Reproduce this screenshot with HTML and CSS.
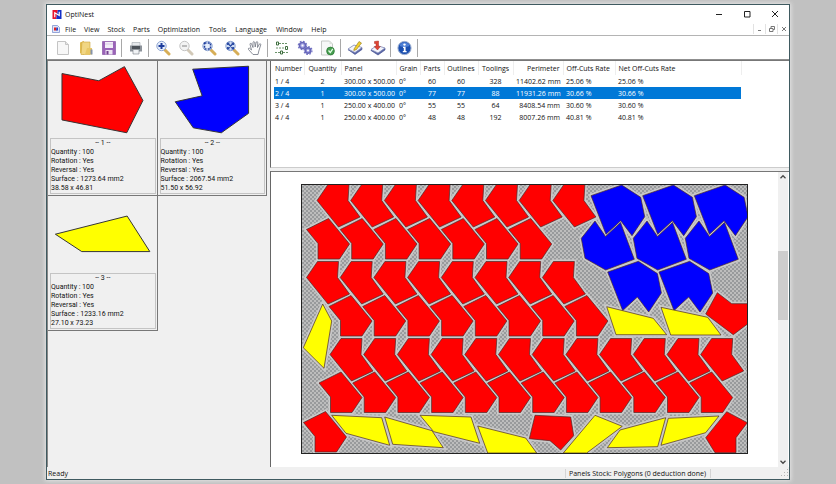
FILE: index.html
```html
<!DOCTYPE html>
<html lang="en">
<head>
<meta charset="utf-8">
<title>OptiNest</title>
<link rel="stylesheet" href="styles.css">
</head>
<body>
<div class="window">
  <header class="titlebar">
    <svg class="logo" viewBox="0 0 10 10" aria-hidden="true"><path fill="#e8122c" d="M0 0h6L4 10H0z"/><path fill="#1430c8" d="M6 0h4v10H4z"/><path fill="none" stroke="#fff" stroke-width="1.3" d="M2.5 8V3l5 3V2"/></svg>
    <h1 class="title">OptiNest</h1>
    <div class="controls">
      <button class="ctl" aria-label="Minimize"><svg viewBox="0 0 8 8"><path d="M1 4.5h6"/></svg></button>
      <button class="ctl" aria-label="Maximize"><svg viewBox="0 0 8 8"><path d="M1.5 1.5h5.500v5.500h-5.500z"/></svg></button>
      <button class="ctl" aria-label="Close"><svg viewBox="0 0 8 8"><path d="M1 1l6 6M7 1l-6 6"/></svg></button>
    </div>
  </header>
  <nav class="menubar">
    <svg class="doc" viewBox="0 0 8 8" aria-hidden="true"><path fill="#dfe6fa" stroke="#7f92cf" stroke-width=".8" d="M.5.5h5l2 2v5h-7z"/><path fill="#d22" d="M2 2.500h2.500v3H2z"/><path fill="#24c" d="M4.500 2.500H6v3H4z"/></svg>
    <button>File</button><button>View</button><button>Stock</button><button>Parts</button><button>Optimization</button><button>Tools</button><button>Language</button><button>Window</button><button>Help</button>
    <div class="mdi">
      <button aria-label="Minimize document"><svg viewBox="0 0 8 8"><path d="M2 5.500h3"/></svg></button>
      <button aria-label="Restore document"><svg viewBox="0 0 8 8"><path d="M1.500 3.500h3.500v3h-3.500zM3 3.500v-2h3.500v3H5"/></svg></button>
      <button aria-label="Close document"><svg viewBox="0 0 8 8"><path d="M2 2l4 4M6 2l-4 4"/></svg></button>
    </div>
  </nav>
  <div class="toolbar">
    <button aria-label="New"><svg viewBox="0 0 16 16"><path fill="#f7f7f7" stroke="#c4c4c4" d="M2.500 1.500h8l3 3v10h-11z"/><path fill="#e4e4e4" stroke="#c4c4c4" d="M10.500 1.500v3h3"/></svg></button>
    <button aria-label="Open"><svg viewBox="0 0 16 16"><path fill="#e2bd52" d="M2 2.500l4-1.500v14l-4-2z"/><path fill="#f1d683" stroke="#cfa63e" stroke-width=".6" d="M4 2h8v12.500H3z"/><path fill="#e9c765" d="M9 8h5v6.500H7z"/><path fill="#8593aa" d="M12.500 9.500h2v5h-2z"/></svg></button>
    <button aria-label="Save"><svg viewBox="0 0 16 16"><path fill="#9a63b8" stroke="#7d4a9c" stroke-width=".6" d="M1.500 1.500h13v13h-13z"/><path fill="#f3eef7" d="M4 2h8v6H4z"/><path fill="#d9c8e4" d="M4 3.500h8v1H4z"/><path fill="#ece4f2" d="M4.500 10h7v4.500h-7z"/><path fill="#74418f" d="M5.500 11h2v3.500h-2z"/></svg></button>
    <span class="sep"></span>
    <button aria-label="Print"><svg viewBox="0 0 16 16"><path fill="#e6e9ec" stroke="#a0a6ac" stroke-width=".6" d="M4 2.500h8v4H4z"/><path fill="#8d939a" d="M2 5.500h12v6H2z"/><path fill="#4c5259" d="M4 6h8v3H4z"/><path fill="#f1f3f5" stroke="#777d84" stroke-width=".6" d="M5 9.500h6v4.500H5z"/></svg></button>
    <span class="sep"></span>
    <button aria-label="Zoom in"><svg viewBox="0 0 16 16"><path stroke="#d7ae57" stroke-width="3" stroke-linecap="round" d="M10 10l4 4"/><circle cx="6.500" cy="6" r="4.700" fill="#e6eefb" stroke="#8ea5d2"/><path stroke="#1c3c9c" stroke-width="2" d="M3.500 6h6M6.500 3v6"/></svg></button>
    <button aria-label="Zoom out"><svg viewBox="0 0 16 16"><path stroke="#d2c9b8" stroke-width="3" stroke-linecap="round" d="M10 10l4 4"/><circle cx="6.500" cy="6" r="4.700" fill="#f3f3f3" stroke="#c4c4c4"/><path stroke="#a9a9a9" stroke-width="1.500" d="M4 6h5"/></svg></button>
    <button aria-label="Zoom window"><svg viewBox="0 0 16 16"><path stroke="#d7ae57" stroke-width="3" stroke-linecap="round" d="M10 10l4 4"/><circle cx="6.500" cy="6" r="4.700" fill="#e6eefb" stroke="#8ea5d2"/><path fill="none" stroke="#1c3c9c" stroke-width="1.500" stroke-dasharray="2 1.200" d="M3.500 3h6v6h-6z"/></svg></button>
    <button aria-label="Zoom all"><svg viewBox="0 0 16 16"><path stroke="#d7ae57" stroke-width="3" stroke-linecap="round" d="M10 10l4 4"/><circle cx="6.500" cy="6" r="4.700" fill="#cfdcf3" stroke="#8ea5d2"/><path fill="none" stroke="#2c4ca4" stroke-width="1.200" d="M4 3.500l5 5M9 3.500l-5 5M3.500 5V3h2M7.500 3h2v2M3.500 7v2h2M7.500 9h2V7"/></svg></button>
    <button aria-label="Pan"><svg viewBox="0 0 16 16"><path fill="#fff" stroke="#6f7480" stroke-width=".8" stroke-linejoin="round" d="M6 14.500L1.500 9.500q-.6-1.600 1-1.300L4.500 10 3 4.200q0-1.200 1.300-.8L6 7.500V2.200q.8-1.300 1.700 0L8.200 7l1-5q1-1 1.600.2L10.500 7.500l2-3.600q1.300-.5 1.300.8l-2 6.300-.8 3.500z"/></svg></button>
    <span class="sep"></span>
    <button aria-label="Parameters"><svg viewBox="0 0 16 16"><g fill="none" stroke="#6a936a" stroke-width="1"><path stroke="#3f6f3f" d="M2.500 2h2v3h-2zM11.500 6.500h2v3h-2zM6.500 11h2v3h-2z"/><path stroke-dasharray="2 1" d="M5 3.500h9M2 8h9M1 12.500h5M9 12.500h5"/></g></svg></button>
    <button aria-label="Optimize"><svg viewBox="0 0 16 16"><circle cx="5.500" cy="5.500" r="3" fill="#a9a9e6" stroke="#6666b8" stroke-width="1.500"/><circle cx="5.500" cy="5.500" r="4.200" fill="none" stroke="#7373c4" stroke-width="1.200" stroke-dasharray="1.700 1.600"/><circle cx="11" cy="10.500" r="2.800" fill="#8f8fdb" stroke="#6666b8" stroke-width="1.500"/><circle cx="11" cy="10.500" r="4" fill="none" stroke="#7373c4" stroke-width="1.200" stroke-dasharray="1.700 1.400"/><circle cx="5.500" cy="5.500" r="1" fill="#fff"/><circle cx="11" cy="10.500" r="1" fill="#fff"/></svg></button>
    <button aria-label="Results"><svg viewBox="0 0 16 16"><path fill="#f7f8f7" stroke="#b9bdb9" stroke-width=".8" d="M1.500 1h8l3 3v11h-11z"/><path fill="#dde2dd" d="M9.500 1v3h3z"/><circle cx="10.500" cy="11" r="3.900" fill="#49a052" stroke="#27752f" stroke-width=".7"/><path fill="none" stroke="#e8ffe8" stroke-width="1.300" d="M8.500 10.500l1.800 2 2.500-3.700"/></svg></button>
    <span class="sep"></span>
    <button aria-label="Edit stock"><svg viewBox="0 0 16 16"><path fill="#5b68aa" stroke="#3d488a" stroke-width=".6" d="M1 9.500l7 5 7-5v-1.800l-7 5-7-3z"/><path fill="#f4f5fb" stroke="#7c86b8" stroke-width=".8" d="M1 9l6-4 8 2.500-7 5z"/><path fill="#f2d02d" stroke="#8f7416" stroke-width=".6" d="M7 9l5-7.500 2.500 1.500-5 6.500-2.700 1z"/></svg></button>
    <button aria-label="Import stock"><svg viewBox="0 0 16 16"><path fill="#5b68aa" stroke="#3d488a" stroke-width=".6" d="M1 10.500l7 4.500 7-5V8l-7 5-7-3z"/><path fill="#f4f5fb" stroke="#7c86b8" stroke-width=".8" d="M1 9.500l6-4 8 2.500-7 5z"/><path fill="#e04434" stroke="#a82a1f" stroke-width=".5" d="M4.500 1.500l4-.5v5.500h1.800L7.500 10 4.200 6.500h1.800V3.500H4.500z"/></svg></button>
    <span class="sep"></span>
    <button aria-label="About"><svg viewBox="0 0 16 16"><circle cx="7.500" cy="8" r="6.600" fill="#1b4fb0" stroke="#9fb0cf" stroke-width="1"/><path fill="#4d7fd6" d="M2.500 6q1.500-3.700 5-3.700t5 3.700q-5 2-10 0z"/><circle cx="7.500" cy="4.600" r="1.200" fill="#fff"/><path fill="#fff" d="M6 6.800h2.600v4.200h1v1.200H5.800V11h1V8H6z"/></svg></button>
    <span class="sep"></span>
  </div>

  <div class="main">
    <aside class="parts">
      <article class="card">
        <svg class="thumb" viewBox="50 60 106 78"><path class="red" d="M61.700 72.700L99 80l26-14.300 18.700 34.300-16.400 32.700-65.600-13z"/></svg>
        <div class="info"><h2>-- 1 --</h2><p>Quantity : 100</p><p>Rotation : Yes</p><p>Reversal : Yes</p><p>Surface : 1273.64 mm2</p><p>38.58 x 46.81</p></div>
      </article>
      <article class="card">
        <svg class="thumb" viewBox="160 60 106 78"><path class="blue" d="M192.700 68.300l56.600-3V113l-27.600 19.700-28.400-5-18.300-26.400 27.300-6z"/></svg>
        <div class="info"><h2>-- 2 --</h2><p>Quantity : 100</p><p>Rotation : Yes</p><p>Reversal : Yes</p><p>Surface : 2067.54 mm2</p><p>51.50 x 56.92</p></div>
      </article>
      <article class="card">
        <svg class="thumb" viewBox="50 196 106 78"><path class="yellow" d="M55 234.700l72.700-18.400 23 36h-69z"/></svg>
        <div class="info"><h2>-- 3 --</h2><p>Quantity : 100</p><p>Rotation : Yes</p><p>Reversal : Yes</p><p>Surface : 1233.16 mm2</p><p>27.10 x 73.23</p></div>
      </article>
    </aside>

    <div class="right">
      <section class="results">
        <table>
          <colgroup><col class="w30"><col class="w37"><col class="w55"><col class="w24"><col class="w24"><col class="w34"><col class="w35"><col class="w50"><col class="w52"><col class="w126"></colgroup>
          <thead><tr><th>Number</th><th class="c">Quantity</th><th>Panel</th><th>Grain</th><th class="c">Parts</th><th class="c">Outlines</th><th class="c">Toolings</th><th class="r">Perimeter</th><th>Off-Cuts Rate</th><th>Net Off-Cuts Rate</th></tr></thead>
          <tbody>
            <tr><td>1 / 4</td><td class="c">2</td><td>300.00 x 500.00</td><td>0°</td><td class="c">60</td><td class="c">60</td><td class="c">328</td><td class="r">11402.62 mm</td><td>25.06 %</td><td>25.06 %</td></tr>
            <tr class="selected"><td>2 / 4</td><td class="c">1</td><td>300.00 x 500.00</td><td>0°</td><td class="c">77</td><td class="c">77</td><td class="c">88</td><td class="r">11931.26 mm</td><td>30.66 %</td><td>30.66 %</td></tr>
            <tr><td>3 / 4</td><td class="c">1</td><td>250.00 x 400.00</td><td>0°</td><td class="c">55</td><td class="c">55</td><td class="c">64</td><td class="r">8408.54 mm</td><td>30.60 %</td><td>30.60 %</td></tr>
            <tr><td>4 / 4</td><td class="c">1</td><td>250.00 x 400.00</td><td>0°</td><td class="c">48</td><td class="c">48</td><td class="c">192</td><td class="r">8007.26 mm</td><td>40.81 %</td><td>40.81 %</td></tr>
          </tbody>
        </table>
      </section>

      <section class="view">
        <div class="canvas">
          <svg class="sheet" viewBox="301 184 447 270" role="img" aria-label="Nested panel">
            <defs>
              <pattern id="hatch" width="4" height="4" patternUnits="userSpaceOnUse"><rect width="4" height="4" fill="#bdbdbd"/><path fill="#989a9c" d="M0 0h2v2H0zM2 2h2v2H2z"/></pattern>
              <path id="a" class="red" d="M317.500 261.500h21l-1 16 12 16.500-21.500 10-21.500-26.500z"/>
              <path id="b" class="red" d="M306.500 229.500l22-11 21 25.500-10 15H318v-15.500z"/>
              <path id="c" class="blue" d="M591 195.700l30.700-10.700 19 12.300 4 19.400-12.700 19-11.300-15-14.700 13.600z"/>
              <path id="d" class="blue" d="M595 221l10.500 15.500 15-14 13.800 36.800-28.600 10.700-20.700-11.700-3.700-20z"/>
              <g id="a4"><use href="#a"/><use href="#a" x="33.700"/><use href="#a" x="67.400"/><use href="#a" x="101.100"/></g>
              <g id="b4"><use href="#b"/><use href="#b" x="33.700"/><use href="#b" x="67.400"/><use href="#b" x="101.100"/></g>
              <g id="nest">
                <use href="#a4" x="10.500" y="-77"/><use href="#a4" x="145.300" y="-77"/>
                <use href="#b4"/><use href="#b" x="134.800"/><use href="#b" x="168.500"/><use href="#b" x="202.200"/>
                <use href="#a4"/><use href="#a4" x="134.800"/>
                <use href="#b4" x="22.500" y="77"/><use href="#b4" x="157.300" y="77"/>
                <use href="#a4" x="23.500" y="77"/><use href="#a4" x="158.300" y="77"/><use href="#a4" x="293.100" y="77"/>
                <use href="#b4" x="12.500" y="153.500"/><use href="#b4" x="147.300" y="153.500"/><use href="#b4" x="282.100" y="153.500"/>
                <use href="#b" x="-3" y="193"/>
                <path class="red" d="M726.700 411.700l20.600 11-11.300 15v15h-21l-9.300-15z"/>
                <path class="red" d="M535 415.300l35.700 1.700 3 18.700-13 14.300-10.700-9.300-20.700-2z"/>
                <path class="red" d="M717.300 292.700l14.400 11h15.800V324l-14.200 10.700-27.600-20.700z"/>
                <use href="#c"/><use href="#c" x="51.700"/><use href="#c" x="103.400"/>
                <use href="#d"/><use href="#d" x="52"/><use href="#d" x="104"/>
                <use href="#c" x="16.700" y="76.300"/><use href="#c" x="68" y="76.300"/>
                <path class="yellow" d="M322.700 304l9 17-7.700 47.300-20.700-20.600z"/>
                <path class="yellow" d="M606.700 306.700l46.600 11.600 13.400 16.400H616z"/>
                <path class="yellow" d="M661 307.300l46.700 10L721 335h-50.300z"/>
                <path class="yellow" d="M331.700 415.300l50 2.400 8 27.600-43.700-12z"/>
                <path class="yellow" d="M384.700 417l47.300 13.700 11.300 17-50.600-3.400z"/>
                <path class="yellow" d="M420 415.300l51 1.700 8.700 26.300-46-11.600z"/>
                <path class="yellow" d="M477.700 426l48 12 11 15h-49z"/>
                <path class="yellow" d="M595 415.300l27.300 11L586.700 453h-23.400z"/>
                <path class="yellow" d="M665.700 417.700l-8 29-50.400 1L620 430z"/>
                <path class="yellow" d="M668.300 418.300L719 416l-13.300 16.700L661 445.300z"/>
              </g>
            </defs>
            <rect x="301" y="184" width="447" height="270" fill="url(#hatch)"/>
            <use class="halo" href="#nest"/>
            <use class="edge" href="#nest"/>
            <rect x="301.500" y="184.500" width="446" height="269" fill="none" stroke="#222"/>
          </svg>
        </div>
        <div class="scroll">
          <button aria-label="Scroll up"><svg viewBox="0 0 8 8"><path d="M2 5l2-2 2 2"/></svg></button>
          <span class="track"></span>
          <span class="thumbbar"></span>
          <span class="track low"></span>
          <button aria-label="Scroll down"><svg viewBox="0 0 8 8"><path d="M2 3l2 2 2-2"/></svg></button>
        </div>
      </section>
    </div>
  </div>

  <footer class="status">
    <span class="ready">Ready</span>
    <span class="stock">Panels Stock: Polygons (0 deduction done)</span>
    <svg class="grip" viewBox="0 0 8 8" aria-hidden="true"><path fill="#b4b4b4" d="M6 0h1v1H6zM6 3h1v1H6zM6 6h1v1H6zM3 3h1v1H3zM3 6h1v1H3zM0 6h1v1H0z"/></svg>
  </footer>
</div>
</body>
</html>
```
FILE: styles.css
```css
* { box-sizing: border-box; }

body {
  margin: 0;
  padding: 4px 46px;
  background: #c1c1c1;
  font: 7px/9px "Open Sans", "Noto Sans", sans-serif;
  color: #111;
}

h1, h2, p { margin: 0; font-size: 7px; font-weight: 400; }

button {
  margin: 0;
  padding: 0;
  border: 0;
  background: none;
  font: inherit;
  color: inherit;
}

.window {
  display: flex;
  flex-direction: column;
  min-height: calc(100vh - 8px);
  border: 1px solid #3f5a60;
  background: #fff;
  box-shadow: 0 0 4px 1px #e4e4e4;
}

.titlebar {
  display: flex;
  align-items: center;
  height: 18px;
  padding-left: 5px;
}
.logo { width: 10px; height: 9px; }
.title { margin-left: 3px; }
.controls { display: flex; margin-left: auto; }
.ctl { display: flex; justify-content: center; align-items: center; width: 28px; height: 18px; }
.ctl svg, .mdi svg { width: 8px; height: 8px; fill: none; stroke: #222; stroke-width: 1; }

.menubar {
  display: flex;
  align-items: center;
  gap: 8px;
  height: 13px;
  padding-left: 5px;
  border-bottom: 1px solid #b4b4b4;
}
.doc { width: 8px; height: 8px; margin-right: -3px; }
.menubar > button { padding-right: 1px; margin-right: -1px; }
.menubar > button:nth-of-type(n+5) { margin-right: 0; }
.mdi { display: flex; margin-left: auto; }
.mdi button { display: flex; align-items: center; justify-content: center; width: 12px; height: 10px; border-left: 1px solid #e2e2e2; }
.mdi svg { stroke: #777; }

.toolbar {
  display: flex;
  align-items: center;
  gap: 1px;
  height: 24px;
  padding-top: 1px;
  padding-left: 5px;
  border-bottom: 1px solid #8f8f8f;
}
.toolbar button { display: flex; justify-content: center; align-items: center; width: 22px; height: 20px; }
.toolbar svg { width: 16px; height: 16px; }
.sep { width: 1px; height: 18px; margin-right: 2px; background: #a8a8a8; }

.main { display: flex; flex: 1; border-top: 1px solid #777; background: #f0f0f0; }

.parts {
  display: grid;
  grid-template-columns: 1fr 1fr;
  align-content: start;
  width: 220px;
  border-left: 1px solid #888;
}
.card {
  display: flex;
  flex-direction: column;
  height: 135px;
  padding: 0 1px 1px 2px;
  border-right: 1px solid #777;
  border-bottom: 1px solid #777;
}
.thumb { width: 100%; height: 77px; }
.info { flex: 1; border: 1px solid #c4c4c4; font-family: Roboto, "Liberation Sans", sans-serif; }
.info h2 { text-align: center; }

.red { fill: #f00; }
.blue { fill: #00f; }
.yellow { fill: #ff0; }
.thumb path { stroke: #333; stroke-width: 1; }

.right {
  display: flex;
  flex: 1;
  flex-direction: column;
  gap: 3px;
  min-width: 0;
  margin-left: 3px;
}
.results, .view { border-left: 1px solid #666; background: #fff; }
.results { height: 107px; padding-left: 3px; border-bottom: 1px solid #ccc; }
.results table { table-layout: fixed; width: 467px; border-collapse: collapse; }
.results th, .results td { height: 12px; padding: 0 3px; font-weight: 400; text-align: left; white-space: nowrap; line-height: 9px; }
.results th { height: 14px; border-right: 1px solid #eee; }
.results th:first-child, .results td:first-child { padding-left: 1px; }
.results .c { padding: 0; text-align: center; }
.results .r { text-align: right; }
.results .selected { background: #0078d7; color: #fff; }
.w24 { width: 24px; }
.w30 { width: 30px; }
.w34 { width: 34px; }
.w35 { width: 35px; }
.w37 { width: 37px; }
.w50 { width: 50px; }
.w52 { width: 52px; }
.w55 { width: 55px; }
.w126 { width: 126px; }

.view { display: flex; flex: 1; border-top: 1px solid #777; }
.canvas { flex: 1; padding: 12px 30px; }
.sheet { display: block; width: 100%; }
.halo { stroke: #c9c9c9; stroke-width: 4; }
.edge { stroke: #4a2a2a; stroke-width: .7; }

.scroll { display: flex; flex-direction: column; width: 10px; margin-right: 1px; background: #f0f0f0; }
.scroll button { width: 10px; height: 10px; }
.scroll svg { display: block; width: 10px; height: 10px; fill: none; stroke: #444; }
.track { flex: 1; }
.track.low { flex: 2; }
.thumbbar { width: 10px; height: 69px; background: #cdcdcd; }

.status { display: flex; align-items: center; height: 12px; padding-left: 1px; background: #f0f0f0; }
.ready { flex: 1; }
.stock { width: 146px; padding-left: 3px; border-left: 1px solid #d4d4d4; border-right: 1px solid #d4d4d4; white-space: nowrap; }
.grip { width: 8px; height: 8px; margin-left: 70px; }
```
